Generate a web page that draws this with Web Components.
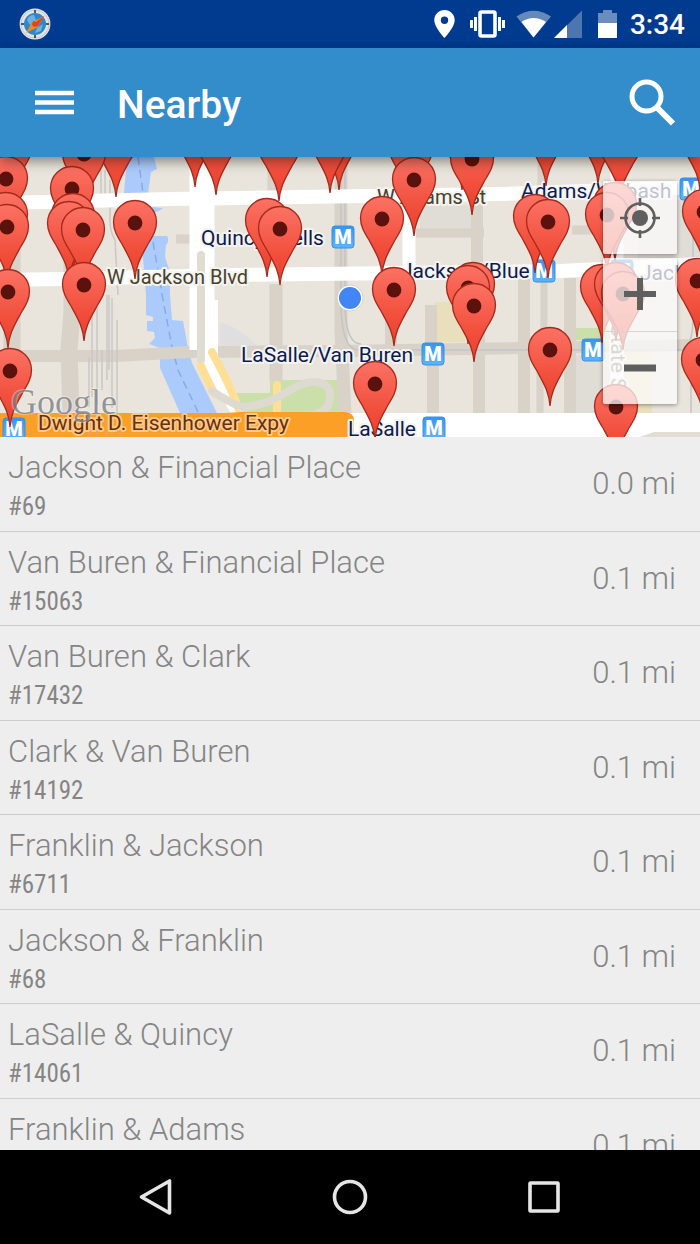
<!DOCTYPE html>
<html lang="en">
<head>
<meta charset="utf-8">
<meta name="viewport" content="width=device-width, initial-scale=1">
<title>Nearby</title>
<style>
html, body {
  margin: 0;
  height: 100%;
}

body {
  font-family: Roboto, "Liberation Sans", sans-serif;
  background: #eee;
}
</style>
</head>
<body>
<nearby-app>
  <status-bar slot="status">3:34</status-bar>
  <app-bar slot="bar">Nearby</app-bar>
  <stop-map slot="map"></stop-map>
  <stop-list>
    <stop-row><span slot="name">Jackson &amp; Financial Place</span><span slot="number">#69</span><span slot="distance">0.0 mi</span></stop-row>
    <stop-row><span slot="name">Van Buren &amp; Financial Place</span><span slot="number">#15063</span><span slot="distance">0.1 mi</span></stop-row>
    <stop-row><span slot="name">Van Buren &amp; Clark</span><span slot="number">#17432</span><span slot="distance">0.1 mi</span></stop-row>
    <stop-row><span slot="name">Clark &amp; Van Buren</span><span slot="number">#14192</span><span slot="distance">0.1 mi</span></stop-row>
    <stop-row><span slot="name">Franklin &amp; Jackson</span><span slot="number">#6711</span><span slot="distance">0.1 mi</span></stop-row>
    <stop-row><span slot="name">Jackson &amp; Franklin</span><span slot="number">#68</span><span slot="distance">0.1 mi</span></stop-row>
    <stop-row><span slot="name">LaSalle &amp; Quincy</span><span slot="number">#14061</span><span slot="distance">0.1 mi</span></stop-row>
    <stop-row><span slot="name">Franklin &amp; Adams</span><span slot="distance">0.1 mi</span></stop-row>
  </stop-list>
  <system-nav slot="nav"></system-nav>
</nearby-app>

<script>
/** @param {string} html */
function template(html) {
  const el = document.createElement('template');
  el.innerHTML = html;
  return el;
}

class BaseElement extends HTMLElement {
  constructor() {
    super();
    this.attachShadow({ mode: 'open' });
    this.shadowRoot.appendChild(this.constructor.template.content.cloneNode(true));
  }
}

class NearbyAppElement extends BaseElement {
  static template = template(/* html */ `
<style>
:host {
  display: flex;
  flex-direction: column;
  height: 100vh;
  overflow: hidden;
}

main {
  flex: 1;
  min-height: 0;
  display: flex;
  flex-direction: column;
}
</style>
<slot name="status"></slot>
<slot name="bar"></slot>
<main>
  <slot name="map"></slot>
  <slot></slot>
</main>
<slot name="nav"></slot>
`);
}

class StatusBarElement extends BaseElement {
  static template = template(/* html */ `
<style>
:host {
  display: flex;
  align-items: center;
  gap: 13px;
  flex: none;
  height: 48px;
  padding: 0 15px 0 19px;
  box-sizing: border-box;
  background: #003b8f;
  color: #fff;
  font-size: 28px;
  font-weight: 500;
}

svg {
  display: block;
  flex: none;
}

.icons {
  margin-left: auto;
}
</style>
<svg width="32" height="32" viewBox="0 0 32 32">
  <circle cx="16" cy="16" r="15.4" fill="#e4e4e2"/>
  <circle cx="16" cy="16" r="14" fill="none" stroke="#c4c6c8"/>
  <circle cx="16" cy="16" r="11" fill="#2f86c8"/>
  <path d="M8 12 Q10 7 15 7 L17 12 L11 17 Z M18 20 l6 -4 -2 7 -6 2z" fill="#69b3e3"/>
  <path d="M25 8 L19 19 L7 25 L13 14 Z" fill="#f08a1c"/>
  <path d="M25 8 L17 14 L14 13 L13 17 L15 19 L19 18 Z" fill="#d9442b"/>
  <path d="M16 2v3M16 27v3M2 16h3M27 16h3" stroke="#56595c" stroke-width="2"/>
</svg>
<svg class="icons" width="183" height="30" viewBox="0 0 183 30" fill="#fff">
  <path fill-rule="evenodd" d="M10.500 1 C4.700 1 .3 5.400 .3 11.100 C.3 18.500 10.500 29 10.500 29 S20.700 18.500 20.700 11.100 C20.700 5.400 16.300 1 10.500 1 Z M10.500 7.600 a3.700 3.700 0 1 1 0 7.400 a3.700 3.700 0 1 1 0 -7.400 Z"/>
  <rect x="46" y="3" width="15" height="24" rx="1.500" fill="none" stroke="#fff" stroke-width="3.600"/>
  <path d="M40 8h3v14h-3z M36 11h3v8h-3z M64 8h3v14h-3z M68 11h3v8h-3z"/>
  <path d="M82.500 7.500 Q99.500 -4 117 7.500 L99.500 28.500 Z" opacity=".4"/>
  <path d="M87.500 13 Q99.500 5 112 13 L99.500 28.500 Z"/>
  <path d="M148 1.500 V29 H120 Z" opacity=".3"/>
  <path d="M133 16 V29 H120 Z"/>
  <path d="M169 1h9v3h5v10h-19V4h5z" opacity=".42"/>
  <path d="M164 14h19v15h-19z"/>
</svg>
<slot></slot>
`);
}

class AppBarElement extends BaseElement {
  static template = template(/* html */ `
<style>
:host {
  display: flex;
  align-items: center;
  flex: none;
  height: 109px;
  padding: 1px 20px 0;
  box-sizing: border-box;
  background: #338dca;
  color: #fff;
  position: relative;
  z-index: 1;
  box-shadow: 0 4px 12px rgb(0 0 0 / 45%);
}

h1 {
  flex: 1;
  margin: 0 0 0 28px;
  padding-top: 3px;
  font-size: 39px;
  line-height: 46px;
  font-weight: 500;
}

button {
  display: flex;
  padding: 0;
  border: 0;
  background: none;
  cursor: pointer;
}
</style>
<button aria-label="Menu">
  <svg width="69" height="48" viewBox="0 0 69 48"><path d="M15 14h39M15 23.500h39M15 33h39" stroke="#fff" stroke-width="4.400"/></svg>
</button>
<h1><slot></slot></h1>
<button aria-label="Search">
  <svg width="56" height="56" viewBox="0 0 56 56" fill="none" stroke="#fff">
    <circle cx="22.500" cy="21.500" r="14.500" stroke-width="5"/>
    <path d="M33 32.500 L49 48.500" stroke-width="6"/>
  </svg>
</button>
`);
}

// Tips of the pins, north to south, so that the nearer ones cover the farther
const PINS = [
  [546, 186], [598, 184], [195, 187], [462, 190], [339, 190], [700, 190], [330, 193], [216, 195], [116, 197],
  [620, 199], [279, 201], [10, 204], [411, 205], [84, 210], [472, 215], [6, 235], [414, 236], [72, 245],
  [615, 261], [704, 268], [6, 271], [607, 271], [73, 272], [535, 273], [382, 275], [267, 277], [548, 278],
  [135, 279], [69, 280], [7, 283], [280, 285], [83, 286], [697, 337], [473, 341], [84, 341], [602, 343],
  [616, 341], [468, 344], [394, 346], [8, 348], [623, 350], [474, 362], [550, 406], [703, 416], [10, 427],
  [375, 440], [616, 463],
];

// Top left corners of the metro badges
const STATIONS = [[332, 226], [422, 343], [423, 417], [533, 260], [582, 339], [611, 260], [680, 178], [3, 418]];

class StopMapElement extends BaseElement {
  static template = template(/* html */ `
<style>
:host {
  display: block;
  flex: none;
  position: relative;
  height: 280px;
  overflow: hidden;
  background: #e9e5dc;
}

.map {
  display: block;
  width: 100%;
  height: 100%;
}

.label {
  font-size: 20px;
  fill: #46412f;
  stroke: #f5f3ee;
  stroke-width: 4px;
  stroke-linejoin: round;
  paint-order: stroke;
}

.station {
  font-size: 21px;
  fill: #0b1b52;
}

.highway {
  font-size: 21px;
  fill: #66300d;
  stroke: #ffc886;
}

.street {
  font-size: 21px;
  fill: #77705f;
}

.badge {
  font-size: 20px;
  font-weight: 900;
  fill: #fff;
  text-anchor: middle;
}

.google {
  font: 36px "Liberation Serif", serif;
  fill: #77777a;
  fill-opacity: .75;
  stroke: #fff;
  stroke-opacity: .35;
  stroke-width: 2px;
  paint-order: stroke;
}

.controls {
  position: absolute;
  top: 24px;
  right: 23px;
  display: flex;
  flex-direction: column;
  gap: 4px;
}

.group {
  display: flex;
  flex-direction: column;
  border-radius: 2px;
  background: rgb(252 252 252 / 74%);
  box-shadow: 0 1px 4px rgb(0 0 0 / 40%);
}

button {
  display: block;
  padding: 0;
  border: 0;
  width: 74px;
  height: 73px;
  background: none;
  cursor: pointer;
}

button svg {
  display: block;
}

button + button {
  border-top: 1px solid #d4d4d4;
}
</style>
<svg class="map" viewBox="0 157 700 280" preserveAspectRatio="xMidYMid slice">
  <defs>
    <linearGradient id="pin-fill" x1="0" y1="0" x2="0" y2="1">
      <stop offset="0" stop-color="#fb7264"/>
      <stop offset=".65" stop-color="#f14d3a"/>
      <stop offset="1" stop-color="#e5402d"/>
    </linearGradient>
    <g id="pin">
      <path d="M0 0 C-1 -14 -6 -22 -13 -35 C-18 -43 -21.500 -49 -21.500 -57 A21.500 21.500 0 0 1 21.500 -57 C21.500 -49 18 -43 13 -35 C6 -22 1 -14 0 0 Z" fill="url(#pin-fill)" stroke="#a52a1c" stroke-width="1.300"/>
      <circle cy="-56" r="7.400" fill="#5c120c"/>
    </g>
    <linearGradient id="badge-fill" x1="0" y1="0" x2="0" y2="1">
      <stop offset="0" stop-color="#3b93ee"/>
      <stop offset="1" stop-color="#5cb5fb"/>
    </linearGradient>
  </defs>

  <!-- blocks -->
  <path d="M638 200h62v60h-62z M576 355h40v58h-40z M420 205h55v25h-55z" fill="#e0dcd6"/>
  <path d="M220 323 q16 2 36 22 h-36z" fill="#dfdfdf"/>
  <path d="M435 302h30v40h-30z M620 352h32v61h-32z" fill="#e9dfbd"/>
  <path d="M270 380h69v34H237v-21h33z M576 328h42v12h-42z" fill="#cadfaa"/>

  <!-- river -->
  <g fill="#abcbfd">
    <path d="M127 157h27l3 12 -6 3 -3 21h-24z"/>
    <path d="M152 207l11 1 -4 3 -7 2z"/>
    <path d="M140 236h27q3 5 -1 9l-1 12 5 15v23l2 25 11 1 5 27 4 15 25 50h-37l-20 -45v-20l-11 -4 6 -6 -1 -6 -7 -1v-10h6v-4l-7 -2v-20l-3 -37z"/>
  </g>
  <path d="M138 157 L143 193 M153 242 L163 300 L172 347 L178 370 L198 412" fill="none" stroke="#87abe5" stroke-width="1.500" stroke-dasharray="8 5"/>

  <!-- side streets -->
  <g fill="none" stroke="#d8d2c8">
    <path d="M0 356 H115 L190 352 L340 351 L700 345" stroke-width="12"/>
    <path d="M416 233h68 M176 239h15 M572 230h30" stroke-width="9"/>
    <path d="M341 157 V330 L346 437" stroke-width="13"/>
    <path d="M274 157v100 M276 284v97" stroke-width="13"/>
    <path d="M477 157v105 M479 285v130 M524 278v135 M433 350v65 M570 278v135 M391 284v65 M431 305v45" stroke-width="12"/>
    <path d="M541 157v30 M544 278v60 M540 355v58" stroke-width="7"/>
    <path d="M72 157v155 l-3 38 2 62 M12 240v110" stroke-width="17"/>
  </g>

  <!-- rail yard -->
  <path d="M89 357v50M92 295v102M97 290v115M102 350v40M107 295v85M112 298v110M117 320v100M109 295v75M101 170v36h4v-36M110 180v40q0 12 5 20l3 55" fill="none" stroke="#c9c8c5" stroke-width="1.500"/>
  <path d="M341 157v145q0 48 18 48h341 M345 157v145q0 42 16 42 M685 350q8 -10 8 -30V200 M691 437V357" fill="none" stroke="#c4c4c6" stroke-width="1.500"/>

  <!-- main streets -->
  <g fill="none" stroke="#fff">
    <path d="M0 203 L170 199 L300 197 L500 194 L700 187" stroke-width="14"/>
    <path d="M0 280 L60 279 L230 275 L400 273 L560 271 L700 264" stroke-width="14"/>
    <path d="M202 157 V350" stroke-width="25"/>
    <path d="M211 300 V365 L238 412" stroke-width="14"/>
    <path d="M409 157V282 M617 157V420" stroke-width="13"/>
    <path d="M350 425 H700" stroke-width="24"/>
  </g>
  <path d="M640 437l14 -5h46v5z" fill="#e2ddd3"/>
  <g fill="none" stroke-linecap="round">
    <path d="M201 255V360" stroke="#e1dcd3" stroke-width="8"/>
    <path d="M201 366 L213 392 M212 352 C220 368 230 384 239 410 M277 385 V413" stroke="#ffdf96" stroke-width="8"/>
    <path d="M212 391 Q228 402 242 407 C270 405 280 395 298 386 C315 378 332 383 330 397 C330 408 322 416 300 417" stroke="#dfdad1" stroke-width="8"/>
  </g>
  <path d="M0 413 H225 L240 412 H345 Q354 413 354 420 V437 H0Z" fill="#fc9f27"/>
  <path d="M89 413v24M97 413v24M107 413v24M112 413v24M120 413v24" stroke="#e2a85e" stroke-width="1.500"/>

  <g id="stations"></g>

  <text class="label" x="377" y="204">W Adams St</text>
  <text class="label" x="107" y="284">W Jackson Blvd</text>
  <text class="label street" transform="translate(611 324) rotate(90)">State St</text>
  <text class="label station" x="201" y="245">Quincy/Wells</text>
  <text class="label station" x="521" y="198">Adams/Wabash</text>
  <text class="label station" x="401" y="278">Jackson/Blue</text>
  <text class="label station" x="640" y="280">Jackson</text>
  <text class="label station" x="241" y="362">LaSalle/Van Buren</text>
  <text class="label station" x="348" y="436">LaSalle</text>
  <text class="label highway" x="38" y="430">Dwight D. Eisenhower Expy</text>

  <circle cx="350" cy="298" r="13" fill="#fff" stroke="#bbb" stroke-width=".6"/>
  <circle cx="350" cy="298" r="11" fill="#4285f4"/>

  <g id="pins"></g>
  <text class="google" x="11" y="414">Google</text>
</svg>
<div class="controls">
  <div class="group">
    <button aria-label="My location">
      <svg width="74" height="73" viewBox="0 0 74 73" fill="none" stroke="#5f5f5f" stroke-width="2.600">
        <circle cx="37" cy="37" r="14.500"/>
        <circle cx="37" cy="37" r="8" fill="#5f5f5f" stroke="none"/>
        <path d="M37 17v8M37 49v8M17 37h8M49 37h8"/>
      </svg>
    </button>
  </div>
  <div class="group">
    <button aria-label="Zoom in">
      <svg width="74" height="73" viewBox="0 0 74 73"><path d="M21 36h32M37 20v32" stroke="#5f5f5f" stroke-width="6"/></svg>
    </button>
    <button aria-label="Zoom out">
      <svg width="74" height="73" viewBox="0 0 74 73"><path d="M21 36h32" stroke="#5f5f5f" stroke-width="7"/></svg>
    </button>
  </div>
</div>
`);

  constructor() {
    super();

    this.shadowRoot.querySelector('#stations').innerHTML = STATIONS.map(([x, y]) => /* html */ `
      <rect x="${x}" y="${y}" width="22" height="22" rx="3" fill="url(#badge-fill)" stroke="#3c8fe0" />
      <text class="badge" x="${x + 11}" y="${y + 18}">M</text>`).join('');

    this.shadowRoot.querySelector('#pins').innerHTML = PINS.map(([x, y]) => /* html */ `
      <use href="#pin" x="${x}" y="${y}" />`).join('');
  }
}

class StopListElement extends BaseElement {
  static template = template(/* html */ `
<style>
:host {
  display: grid;
  grid-auto-rows: 95px 94px;
  flex: 1;
  min-height: 0;
  overflow-y: auto;
  scrollbar-width: none;
  background: #eee;
}
</style>
<slot></slot>
`);
}

class StopRowElement extends BaseElement {
  static template = template(/* html */ `
<style>
:host {
  display: block;
  box-sizing: border-box;
  border-bottom: 1px solid #cdcdcd;
}

a {
  display: flex;
  align-items: center;
  justify-content: space-between;
  height: 100%;
  padding: 0 24px 0 8px;
  box-sizing: border-box;
  color: #858585;
  font-size: 31px;
  line-height: 38px;
  font-weight: 300;
  text-decoration: none;
}

.text {
  display: flex;
  flex-direction: column;
  gap: 5px;
  padding-top: 3px;
}

.number {
  min-height: 30px;
  font-family: "Roboto Condensed", "Liberation Sans Narrow", Roboto, sans-serif;
  font-size: 25px;
  line-height: 30px;
  font-weight: 400;
}
</style>
<a href="#">
  <span class="text">
    <slot name="name"></slot>
    <span class="number"><slot name="number"></slot></span>
  </span>
  <slot name="distance"></slot>
</a>
`);
}

class SystemNavElement extends BaseElement {
  static template = template(/* html */ `
<style>
:host {
  display: flex;
  flex: none;
  height: 94px;
  padding: 0 59px;
  box-sizing: border-box;
  background: #000;
}

button {
  flex: 1;
  display: flex;
  align-items: center;
  justify-content: center;
  padding: 0;
  border: 0;
  background: none;
  cursor: pointer;
}
</style>
<button aria-label="Back">
  <svg width="40" height="40" viewBox="0 0 40 40"><path d="M33.500 4 V36 L5.500 20 Z" fill="none" stroke="#e6e6e6" stroke-width="3.600" stroke-linejoin="round"/></svg>
</button>
<button aria-label="Home">
  <svg width="40" height="40" viewBox="0 0 40 40"><circle cx="20" cy="20" r="15.500" fill="none" stroke="#e6e6e6" stroke-width="3.600"/></svg>
</button>
<button aria-label="Overview">
  <svg width="40" height="40" viewBox="0 0 40 40"><rect x="6" y="6" width="28" height="28" rx=".5" fill="none" stroke="#e6e6e6" stroke-width="3.600" stroke-linejoin="round"/></svg>
</button>
`);
}

window.customElements.define('nearby-app', NearbyAppElement);
window.customElements.define('status-bar', StatusBarElement);
window.customElements.define('app-bar', AppBarElement);
window.customElements.define('stop-map', StopMapElement);
window.customElements.define('stop-list', StopListElement);
window.customElements.define('stop-row', StopRowElement);
window.customElements.define('system-nav', SystemNavElement);
</script>
</body>
</html>
